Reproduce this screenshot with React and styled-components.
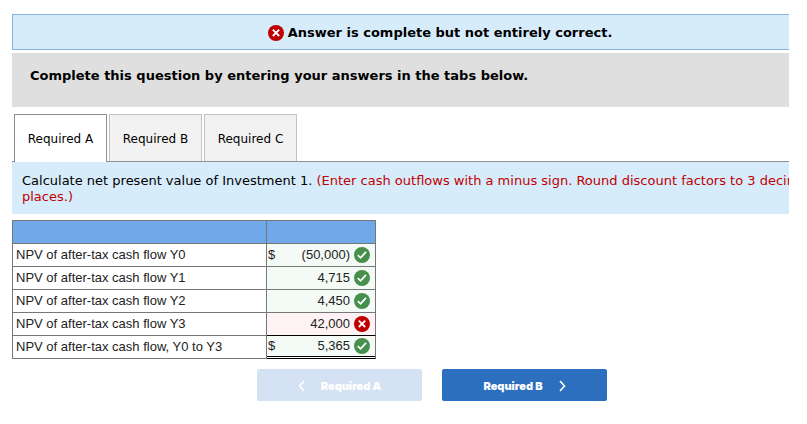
import React, { useState } from "react";
import styled, { createGlobalStyle } from "styled-components";

const GlobalStyle = createGlobalStyle`
  *, *::before, *::after { box-sizing: border-box; }
  body {
    margin: 0;
    background: #fff;
    color: #000;
    font-family: Verdana, "DejaVu Sans", sans-serif;
    font-size: 13px;
    line-height: 16px;
  }
`;

const Viewport = styled.main`
  margin: 14px 18px 0 12px;
  overflow: hidden;
`;

const Sheet = styled.div`
  min-width: 856px;
`;

const Banner = styled.div`
  display: flex;
  align-items: center;
  justify-content: center;
  gap: 4px;
  height: 36px;
  padding-top: 2px;
  border: 1px solid #86b3e0;
  background: #d7ecfb;
  font-weight: bold;
`;

const Instruction = styled.div`
  margin-top: 3px;
  padding: 15px 18px 23px;
  background: #dfdfdf;
  font-weight: bold;
`;

const TabList = styled.div`
  display: flex;
  gap: 2px;
  margin-top: 7px;
  padding-left: 2px;
  border-bottom: 1px solid #8b9398;
`;

const Tab = styled.button`
  width: 93px;
  height: ${(p) => (p.$active ? 48 : 47)}px;
  margin-bottom: ${(p) => (p.$active ? -1 : 0)}px;
  padding: ${(p) => (p.$active ? "1px 0 1px" : "2px 0 0")};
  border: 1px solid ${(p) => (p.$active ? "#8b8f93" : "#c2c2c2")};
  border-bottom: 0;
  background: ${(p) => (p.$active ? "#fff" : "#f2f2f2")};
  color: #000;
  font: inherit;
  font-size: 12px;
  white-space: nowrap;
`;

const Prompt = styled.p`
  margin: 0;
  padding: 11px 10px 9px;
  background: #d7ecfb;
`;

const Hint = styled.span`
  color: #c00000;
`;

const Table = styled.table`
  width: 364px;
  margin-top: 6px;
  table-layout: fixed;
  border-spacing: 0;
  border-top: 1px solid #777;
  border-left: 1px solid #777;
  font-family: Arial, "Liberation Sans", sans-serif;
  font-size: 13px;
  color: #222;
`;

const LabelCol = styled.col`
  width: 254px;
`;

const HeadCell = styled.th`
  height: 23px;
  padding: 0;
  border-right: 1px solid #777;
  border-bottom: 1px solid #777;
  background: #70a9ea;
`;

const LabelCell = styled.th`
  height: 23px;
  padding: 0 3px;
  border-right: 1px solid #777;
  border-bottom: 1px solid #777;
  font-weight: normal;
  text-align: left;
`;

const ValueCell = styled.td`
  height: 23px;
  padding: 0;
  border-right: 1px solid #777;
  border-bottom: 1px solid ${(p) => (p.$ruled ? "#000" : "#777")};
`;

const Value = styled.div`
  display: flex;
  align-items: center;
  height: ${(p) => (p.$total ? 21 : 22)}px;
  margin-bottom: ${(p) => (p.$total ? 1 : 0)}px;
  padding: 0 5px 0 1px;
  border-bottom: ${(p) => (p.$total ? "1px solid #000" : "0")};
  background: ${(p) => (p.$correct ? "#f4faf6" : "#fff2f4")};
`;

const Amount = styled.span`
  flex: 1;
  padding-right: 4px;
  text-align: right;
`;

const Mark = styled.svg`
  display: block;
  flex: none;
  width: 16px;
  height: 16px;
`;

const Pager = styled.nav`
  display: flex;
  justify-content: center;
  gap: 20px;
  margin-top: 10px;
  padding-right: 16px;
`;

const PagerButton = styled.button`
  display: flex;
  align-items: center;
  justify-content: center;
  gap: 16px;
  width: 165px;
  height: 32px;
  padding: 2px 0 0;
  border: 0;
  border-radius: 2px;
  background: ${(p) => (p.disabled ? "#d5e2f3" : "#2c6fbf")};
  color: #fff;
  font-family: Inter, sans-serif;
  font-size: 11px;
  font-weight: 900;
`;

const Chevron = styled.svg`
  width: 7px;
  height: 12px;
  fill: none;
  stroke: #fff;
  stroke-width: 1.6;
`;

function StatusMark({ correct }) {
  return (
    <Mark viewBox="0 0 16 16" role="img" aria-label={correct ? "correct" : "incorrect"}>
      <circle cx="8" cy="8" r="8" fill={correct ? "#468f4c" : "#c00000"} />
      <path
        d={correct ? "M3.8 8.2 6.6 10.8 12 4.8" : "M4.8 4.6 11.2 11 M11.2 4.6 4.8 11"}
        fill="none"
        stroke="#fff"
        strokeWidth="1.8"
      />
    </Mark>
  );
}

const tabs = ["Required A", "Required B", "Required C"];

const rows = [
  { label: "NPV of after-tax cash flow Y0", currency: "$", amount: "(50,000)", correct: true },
  { label: "NPV of after-tax cash flow Y1", amount: "4,715", correct: true },
  { label: "NPV of after-tax cash flow Y2", amount: "4,450", correct: true },
  { label: "NPV of after-tax cash flow Y3", amount: "42,000", correct: false, ruled: true },
  { label: "NPV of after-tax cash flow, Y0 to Y3", currency: "$", amount: "5,365", correct: true, ruled: true, total: true },
];

export default function App() {
  const [active, setActive] = useState(0);
  return (
    <>
      <GlobalStyle />
      <Viewport>
        <Sheet>
          <Banner>
            <StatusMark correct={false} />
            <span>Answer is complete but not entirely correct.</span>
          </Banner>
          <Instruction>Complete this question by entering your answers in the tabs below.</Instruction>
          <TabList role="tablist">
            {tabs.map((name, i) => (
              <Tab key={name} role="tab" aria-selected={i === active} $active={i === active} onClick={() => setActive(i)}>
                {name}
              </Tab>
            ))}
          </TabList>
          <Prompt>
            Calculate net present value of Investment 1.{" "}
            <Hint>(Enter cash outflows with a minus sign. Round discount factors to 3 decimal places.)</Hint>
          </Prompt>
          <Table>
            <colgroup>
              <LabelCol />
              <col />
            </colgroup>
            <thead>
              <tr>
                <HeadCell />
                <HeadCell />
              </tr>
            </thead>
            <tbody>
              {rows.map((row) => (
                <tr key={row.label}>
                  <LabelCell scope="row">{row.label}</LabelCell>
                  <ValueCell $ruled={row.ruled}>
                    <Value $correct={row.correct} $total={row.total}>
                      {row.currency && <span>{row.currency}</span>}
                      <Amount>{row.amount}</Amount>
                      <StatusMark correct={row.correct} />
                    </Value>
                  </ValueCell>
                </tr>
              ))}
            </tbody>
          </Table>
          <Pager>
            <PagerButton disabled>
              <Chevron viewBox="0 0 7 12"><path d="M6 1 1.5 6 6 11" /></Chevron>
              Required A
            </PagerButton>
            <PagerButton>
              Required B
              <Chevron viewBox="0 0 7 12"><path d="M1 1 5.5 6 1 11" /></Chevron>
            </PagerButton>
          </Pager>
        </Sheet>
      </Viewport>
    </>
  );
}
